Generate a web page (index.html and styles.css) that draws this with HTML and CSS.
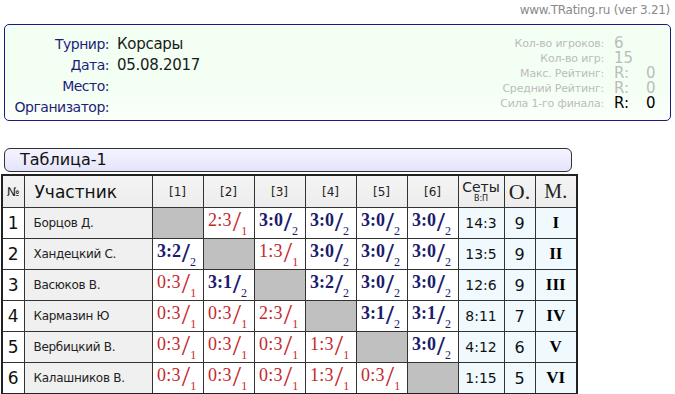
FILE: index.html
```html
<!DOCTYPE html>
<html lang="ru">
<head>
<meta charset="utf-8">
<title>Корсары</title>
<link rel="stylesheet" href="styles.css">
</head>
<body>
<div class="site">www.TRating.ru (ver 3.21)</div>
<div class="info">
  <div class="meta">
    <div class="lbl">Турнир:</div><div class="val">Корсары</div>
    <div class="lbl">Дата:</div><div class="val">05.08.2017</div>
    <div class="lbl">Место:</div><div class="val"></div>
    <div class="lbl">Организатор:</div><div class="val"></div>
  </div>
  <div class="stats">
    <div class="sl">Кол-во игроков:</div><div class="sv">6</div>
    <div class="sl">Кол-во игр:</div><div class="sv">15</div>
    <div class="sl">Макс. Рейтинг:</div><div class="sv"><span class="r">R:</span>0</div>
    <div class="sl">Средний Рейтинг:</div><div class="sv"><span class="r">R:</span>0</div>
    <div class="sl">Сила 1-го финала:</div><div class="sv dark"><span class="r">R:</span>0</div>
  </div>
</div>
<div class="title">Таблица-1</div>
<table class="grid">
  <colgroup>
    <col class="c-no"><col class="c-name">
    <col class="c-g"><col class="c-g"><col class="c-g"><col class="c-g"><col class="c-g"><col class="c-g">
    <col class="c-sets"><col class="c-o"><col class="c-m">
  </colgroup>
  <tr class="hd">
    <td class="h-no">№</td>
    <td class="h-name">Участник</td>
    <td>[1]</td><td>[2]</td><td>[3]</td><td>[4]</td><td>[5]</td><td>[6]</td>
    <td class="h-sets">Сеты<small>В:П</small></td>
    <td class="h-o">О.</td>
    <td class="h-m">М.</td>
  </tr>
  <tr>
    <td class="no">1</td><td class="name">Борцов Д.</td>
    <td class="x"></td>
    <td class="l"><span class="s">2:3</span><i>/</i><sub>1</sub></td>
    <td class="w"><span class="s">3:0</span><i>/</i><sub>2</sub></td>
    <td class="w"><span class="s">3:0</span><i>/</i><sub>2</sub></td>
    <td class="w"><span class="s">3:0</span><i>/</i><sub>2</sub></td>
    <td class="w"><span class="s">3:0</span><i>/</i><sub>2</sub></td>
    <td class="sets">14:3</td><td class="pts">9</td><td class="pl">I</td>
  </tr>
  <tr>
    <td class="no">2</td><td class="name">Хандецкий С.</td>
    <td class="w"><span class="s">3:2</span><i>/</i><sub>2</sub></td>
    <td class="x"></td>
    <td class="l"><span class="s">1:3</span><i>/</i><sub>1</sub></td>
    <td class="w"><span class="s">3:0</span><i>/</i><sub>2</sub></td>
    <td class="w"><span class="s">3:0</span><i>/</i><sub>2</sub></td>
    <td class="w"><span class="s">3:0</span><i>/</i><sub>2</sub></td>
    <td class="sets">13:5</td><td class="pts">9</td><td class="pl">II</td>
  </tr>
  <tr>
    <td class="no">3</td><td class="name">Васюков В.</td>
    <td class="l"><span class="s">0:3</span><i>/</i><sub>1</sub></td>
    <td class="w"><span class="s">3:1</span><i>/</i><sub>2</sub></td>
    <td class="x"></td>
    <td class="w"><span class="s">3:2</span><i>/</i><sub>2</sub></td>
    <td class="w"><span class="s">3:0</span><i>/</i><sub>2</sub></td>
    <td class="w"><span class="s">3:0</span><i>/</i><sub>2</sub></td>
    <td class="sets">12:6</td><td class="pts">9</td><td class="pl">III</td>
  </tr>
  <tr>
    <td class="no">4</td><td class="name">Кармазин Ю</td>
    <td class="l"><span class="s">0:3</span><i>/</i><sub>1</sub></td>
    <td class="l"><span class="s">0:3</span><i>/</i><sub>1</sub></td>
    <td class="l"><span class="s">2:3</span><i>/</i><sub>1</sub></td>
    <td class="x"></td>
    <td class="w"><span class="s">3:1</span><i>/</i><sub>2</sub></td>
    <td class="w"><span class="s">3:1</span><i>/</i><sub>2</sub></td>
    <td class="sets">8:11</td><td class="pts">7</td><td class="pl">IV</td>
  </tr>
  <tr>
    <td class="no">5</td><td class="name">Вербицкий В.</td>
    <td class="l"><span class="s">0:3</span><i>/</i><sub>1</sub></td>
    <td class="l"><span class="s">0:3</span><i>/</i><sub>1</sub></td>
    <td class="l"><span class="s">0:3</span><i>/</i><sub>1</sub></td>
    <td class="l"><span class="s">1:3</span><i>/</i><sub>1</sub></td>
    <td class="x"></td>
    <td class="w"><span class="s">3:0</span><i>/</i><sub>2</sub></td>
    <td class="sets">4:12</td><td class="pts">6</td><td class="pl">V</td>
  </tr>
  <tr>
    <td class="no">6</td><td class="name">Калашников В.</td>
    <td class="l"><span class="s">0:3</span><i>/</i><sub>1</sub></td>
    <td class="l"><span class="s">0:3</span><i>/</i><sub>1</sub></td>
    <td class="l"><span class="s">0:3</span><i>/</i><sub>1</sub></td>
    <td class="l"><span class="s">1:3</span><i>/</i><sub>1</sub></td>
    <td class="l"><span class="s">0:3</span><i>/</i><sub>1</sub></td>
    <td class="x"></td>
    <td class="sets">1:15</td><td class="pts">5</td><td class="pl">VI</td>
  </tr>
</table>
</body>
</html>
```

FILE: styles.css
```css
html, body {
  margin: 0;
  padding: 0;
  background: #fff;
  font-family: "DejaVu Sans", Verdana, sans-serif;
  color: #111;
}

.site {
  height: 24px;
  line-height: 20px;
  text-align: right;
  padding-right: 5px;
  font-size: 12px;
  color: #8a8a8a;
  letter-spacing: -0.3px;
}

.info {
  box-sizing: border-box;
  margin-left: 4px;
  width: 667px;
  height: 97px;
  border: 1px solid #1a1a80;
  border-radius: 5px;
  background: linear-gradient(to bottom, #f2fff2, #f4fff4 70%, #fbfffb);
  display: flex;
  justify-content: space-between;
}

.meta {
  display: grid;
  grid-template-columns: 104px auto;
  column-gap: 8px;
  padding-top: 8px;
  grid-auto-rows: 21px;
  align-items: center;
}

.lbl {
  text-align: right;
  font-size: 14px;
  color: #1e1e7a;
  letter-spacing: -0.5px;
  white-space: nowrap;
}

.val {
  font-size: 15px;
  color: #1a1a1a;
  letter-spacing: -0.3px;
}

.stats {
  display: grid;
  grid-template-columns: auto 56px;
  column-gap: 10px;
  padding-top: 11px;
  grid-auto-rows: 15px;
  align-items: center;
}

.sl {
  text-align: right;
  font-size: 11px;
  line-height: 13px;
  color: #bcbcbc;
  letter-spacing: -0.2px;
  white-space: nowrap;
}

.sv {
  font-size: 15px;
  line-height: 15px;
  color: #bcbcbc;
}

.sv .r {
  display: inline-block;
  width: 32px;
}

.sv.dark {
  color: #000;
}

.title {
  box-sizing: border-box;
  margin: 27px 0 0 4px;
  width: 568px;
  height: 24px;
  border: 1px solid #333;
  border-radius: 6px;
  background: linear-gradient(to bottom, #f4f4ff, #e4e4fa);
  padding-left: 15px;
  font-size: 16px;
  line-height: 22px;
  color: #111;
}

.grid {
  margin: 2px 0 0 1px;
  border-collapse: collapse;
  table-layout: fixed;
  width: 575px;
  border: 2px solid #222;
}

.c-no { width: 22px; }
.c-name { width: 128px; }
.c-g { width: 51px; }
.c-sets { width: 46px; }
.c-o { width: 31px; }
.c-m { width: 42px; }

.grid td {
  border: 1px solid #333;
  padding: 0;
  text-align: center;
  white-space: nowrap;
}

.hd td {
  height: 31px;
  background: linear-gradient(to bottom, #f4f4f4, #ececec);
  font-size: 12px;
  color: #222;
}

.hd .h-name {
  text-align: left;
  padding-left: 10px;
  font-size: 17px;
  color: #111;
}

.hd .h-sets {
  font-size: 14px;
  line-height: 13px;
  color: #222;
}

.h-sets small {
  display: block;
  font-size: 8px;
  line-height: 9px;
}

.hd .h-o {
  font-family: "Liberation Serif", "Times New Roman", serif;
  font-size: 22px;
}

.hd .h-m {
  font-family: "Liberation Serif", "Times New Roman", serif;
  font-size: 20px;
}

.grid tr:not(.hd) td {
  height: 30px;
}

.no {
  font-size: 17px;
  background: #fff;
}

.name {
  background: #f0f0f0;
  text-align: left !important;
  padding-left: 9px !important;
  font-size: 12px;
  color: #222;
  letter-spacing: -0.3px;
}

.x {
  background: #c0c0c0;
}

.w, .l {
  background: #fff;
  font-family: "Liberation Serif", "Times New Roman", serif;
  line-height: 20px;
  padding-right: 2px !important;
}

.w { color: #1c1c6e; }
.l { color: #c4282d; }

.s {
  font-size: 18px;
  letter-spacing: 0.3px;
}

.w .s { font-weight: bold; letter-spacing: 0; }

.w i, .l i {
  font-style: normal;
  font-weight: normal;
  font-size: 30px;
  vertical-align: -5px;
  margin-left: 1px;
}

.w i { font-weight: bold; font-size: 28px; }

.w sub, .l sub {
  font-size: 12px;
  line-height: 12px;
  vertical-align: -9px;
}

.sets, .pts, .pl {
  background: #f0fafe;
}

.sets {
  font-size: 14px;
  color: #111;
}

.pts {
  font-size: 16px;
  color: #111;
}

.pl {
  font-family: "Liberation Serif", "Times New Roman", serif;
  font-weight: bold;
  font-size: 17px;
  color: #000;
}
```
